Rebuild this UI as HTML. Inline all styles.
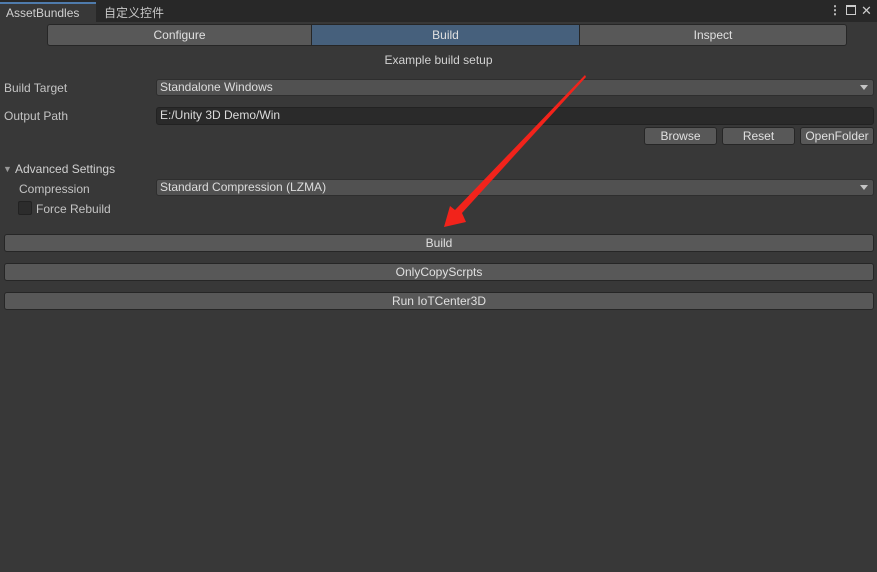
<!DOCTYPE html>
<html><head><meta charset="utf-8"><style>
*{box-sizing:border-box;margin:0;padding:0}
body{width:877px;height:572px;background:#383838;font-family:"Liberation Sans","Noto Sans CJK SC",sans-serif;font-size:12px;color:#c4c4c4;position:relative;overflow:hidden}
.a{position:absolute}
.btn{position:absolute;background:#585858;border:1px solid #262626;border-radius:3px;text-align:center;color:#e0e0e0;line-height:16px;font-size:12px}
.dd{position:absolute;background:#515151;border:1px solid #2e2e2e;border-radius:3px;padding-left:3px;line-height:15px;color:#dcdcdc}
.lbl{position:absolute;line-height:16px}
</style></head><body>
<div class="a" style="left:0;top:0;width:877px;height:22px;background:#282828"></div>
<div class="a" style="left:0;top:2px;width:96px;height:20px;background:#383838;border-top:2px solid #4f7bac"></div>
<div class="lbl" style="left:6px;top:5px;color:#d0d0d0">AssetBundles</div>
<div class="lbl" style="left:104px;top:5px;color:#c8c8c8">自定义控件</div>
<div class="lbl" style="left:829px;top:2px;color:#ccc;font-weight:bold">⋮</div>
<div class="a" style="left:846px;top:5px;width:10px;height:10px;border:1px solid #ccc;border-top-width:2px"></div>
<div class="lbl" style="left:861px;top:3px;color:#ccc;font-size:13px">✕</div>

<div class="btn" style="left:47px;top:24px;width:265px;height:22px;line-height:20px;border-radius:3px 0 0 3px">Configure</div>
<div class="btn" style="left:311px;top:24px;width:269px;height:22px;line-height:20px;border-radius:0;background:#46607c">Build</div>
<div class="btn" style="left:579px;top:24px;width:268px;height:22px;line-height:20px;border-radius:0 3px 3px 0">Inspect</div>
<div class="lbl" style="left:0;width:877px;text-align:center;top:52px;color:#d2d2d2">Example build setup</div>

<div class="lbl" style="left:4px;top:80px">Build Target</div>
<div class="dd" style="left:156px;top:79px;width:718px;height:17px">Standalone Windows</div>
<div class="lbl" style="left:4px;top:108px">Output Path</div>
<div class="dd" style="left:156px;top:107px;width:718px;height:18px;background:#2a2a2a;border-color:#222">E:/Unity 3D Demo/Win</div>
<div class="btn" style="left:644px;top:127px;width:73px;height:18px">Browse</div>
<div class="btn" style="left:722px;top:127px;width:73px;height:18px">Reset</div>
<div class="btn" style="left:800px;top:127px;width:74px;height:18px">OpenFolder</div>

<div class="lbl" style="left:3px;top:161px;font-size:9px;color:#999">▼</div>
<div class="lbl" style="left:15px;top:161px;color:#d0d0d0">Advanced Settings</div>
<div class="lbl" style="left:19px;top:181px">Compression</div>
<div class="dd" style="left:156px;top:179px;width:718px;height:17px">Standard Compression (LZMA)</div>
<div class="a" style="left:18px;top:201px;width:14px;height:14px;background:#2c2c2c;border:1px solid #222;border-radius:2px"></div>
<div class="lbl" style="left:36px;top:201px">Force Rebuild</div>
<svg class="a" style="left:0;top:0" width="877" height="572">
<path d="M860 85 L868 85 L864 90 Z" fill="#c4c4c4"/>
<path d="M860 185 L868 185 L864 190 Z" fill="#c4c4c4"/>
</svg>

<div class="btn" style="left:4px;top:234px;width:870px;height:18px">Build</div>
<div class="btn" style="left:4px;top:263px;width:870px;height:18px">OnlyCopyScrpts</div>
<div class="btn" style="left:4px;top:292px;width:870px;height:18px">Run IoTCenter3D</div>

<svg class="a" style="left:0;top:0" width="877" height="572">
<path d="M585 75 L586 77 L462 213 L466 222 L444 227 L450 206 L455 210 Z" fill="#f2231b"/>
</svg>
</body></html>
